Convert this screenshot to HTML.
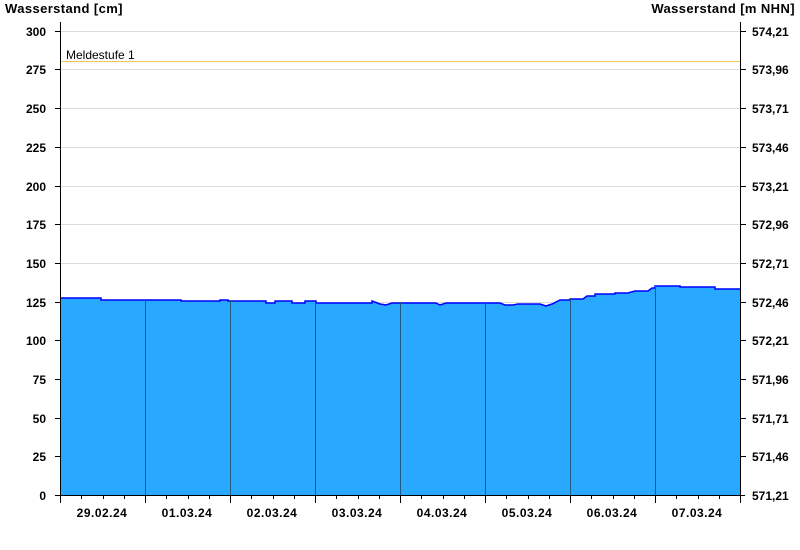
<!DOCTYPE html>
<html><head><meta charset="utf-8"><style>
html,body{margin:0;padding:0;background:#fff;width:800px;height:550px;overflow:hidden}
svg text{font-family:"Liberation Sans",Arial,sans-serif;font-weight:bold;font-size:12px;fill:#000}
svg text.h{font-size:13px;letter-spacing:0.4px}
svg text.d{letter-spacing:0.5px}
</style></head><body>
<svg width="800" height="550" xmlns="http://www.w3.org/2000/svg" shape-rendering="crispEdges">
<text class="h" x="5" y="13">Wasserstand [cm]</text>
<text class="h" x="795" y="13" text-anchor="end">Wasserstand [m NHN]</text>
<g stroke="#dcdcdc" stroke-width="1">
<line x1="61" x2="740" y1="31.5" y2="31.5"/>
<line x1="61" x2="740" y1="69.5" y2="69.5"/>
<line x1="61" x2="740" y1="108.5" y2="108.5"/>
<line x1="61" x2="740" y1="147.5" y2="147.5"/>
<line x1="61" x2="740" y1="186.5" y2="186.5"/>
<line x1="61" x2="740" y1="224.5" y2="224.5"/>
<line x1="61" x2="740" y1="263.5" y2="263.5"/>
<line x1="61" x2="740" y1="302.5" y2="302.5"/>
</g>
<line x1="61" x2="740" y1="61.5" y2="61.5" stroke="#f0c850"/>
<text x="66" y="59" style="font-weight:normal;font-size:12px">Meldestufe 1</text>
<path d="M60,298 H101 V300 H181 V301 H220 V300 H228 V301 H266 V303 H275 V301 H292 V303 H305 V301 H316 V303 H372 V301 L380 304 L386 305 L392 303 H436 L440 305 L446 303 H500 L505 305 H513 L518 304 H530 L540 304 L546 306 L552 304 L560 300 H570 V299 H583 L587 296 H595 V294 H615 V293 H628 L635 291 H648 L652 288 H655 V286 H680 V287 H715 V289 H740 V495 H60 Z" fill="#29a8ff" stroke="none"/>
<path d="M60,298 H101 V300 H181 V301 H220 V300 H228 V301 H266 V303 H275 V301 H292 V303 H305 V301 H316 V303 H372 V301 L380 304 L386 305 L392 303 H436 L440 305 L446 303 H500 L505 305 H513 L518 304 H530 L540 304 L546 306 L552 304 L560 300 H570 V299 H583 L587 296 H595 V294 H615 V293 H628 L635 291 H648 L652 288 H655 V286 H680 V287 H715 V289 H740" fill="none" stroke="#0000ff" stroke-width="1.5" shape-rendering="auto"/>
<g stroke="#1e5a82" stroke-width="1">
<line x1="145.5" x2="145.5" y1="299" y2="495"/><line x1="230.5" x2="230.5" y1="300" y2="495"/>
<line x1="315.5" x2="315.5" y1="302" y2="495"/><line x1="400.5" x2="400.5" y1="302" y2="495"/>
<line x1="485.5" x2="485.5" y1="302" y2="495"/><line x1="570.5" x2="570.5" y1="298" y2="495"/>
<line x1="655.5" x2="655.5" y1="286" y2="495"/>
</g>
<g stroke="#000" stroke-width="1">
<line x1="60.5" x2="60.5" y1="22" y2="500"/>
<line x1="740.5" x2="740.5" y1="22" y2="500"/>
<line x1="55" x2="745" y1="495.5" y2="495.5"/>
<path d="M55,31.5H60M55,69.5H60M55,108.5H60M55,147.5H60M55,186.5H60M55,224.5H60M55,263.5H60M55,302.5H60M55,340.5H60M55,379.5H60M55,418.5H60M55,456.5H60"/>
<path d="M741,31.5H746M741,69.5H746M741,108.5H746M741,147.5H746M741,186.5H746M741,224.5H746M741,263.5H746M741,302.5H746M741,340.5H746M741,379.5H746M741,418.5H746M741,456.5H746"/>
<path d="M60.5,495V503M145.5,495V503M230.5,495V503M315.5,495V503M400.5,495V503M485.5,495V503M570.5,495V503M655.5,495V503M740.5,495V503"/>
<path d="M81.5,495V499M103.5,495V499M124.5,495V499M166.5,495V499M188.5,495V499M209.5,495V499M251.5,495V499M273.5,495V499M294.5,495V499M336.5,495V499M358.5,495V499M379.5,495V499M421.5,495V499M443.5,495V499M464.5,495V499M506.5,495V499M528.5,495V499M549.5,495V499M591.5,495V499M613.5,495V499M634.5,495V499M676.5,495V499M698.5,495V499M719.5,495V499"/>
</g>
<g text-anchor="end">
<text x="46" y="36">300</text><text x="46" y="74">275</text><text x="46" y="113">250</text><text x="46" y="152">225</text><text x="46" y="191">200</text><text x="46" y="229">175</text><text x="46" y="268">150</text><text x="46" y="307">125</text><text x="46" y="345">100</text><text x="46" y="384">75</text><text x="46" y="423">50</text><text x="46" y="461">25</text><text x="46" y="500">0</text>
</g>
<g>
<text x="752" y="36">574,21</text><text x="752" y="74">573,96</text><text x="752" y="113">573,71</text><text x="752" y="152">573,46</text><text x="752" y="191">573,21</text><text x="752" y="229">572,96</text><text x="752" y="268">572,71</text><text x="752" y="307">572,46</text><text x="752" y="345">572,21</text><text x="752" y="384">571,96</text><text x="752" y="423">571,71</text><text x="752" y="461">571,46</text><text x="752" y="500">571,21</text>
</g>
<g text-anchor="middle">
<text class="d" x="102" y="517">29.02.24</text><text class="d" x="187" y="517">01.03.24</text><text class="d" x="272" y="517">02.03.24</text><text class="d" x="357" y="517">03.03.24</text><text class="d" x="442" y="517">04.03.24</text><text class="d" x="527" y="517">05.03.24</text><text class="d" x="612" y="517">06.03.24</text><text class="d" x="697" y="517">07.03.24</text>
</g>
</svg>
</body></html>
